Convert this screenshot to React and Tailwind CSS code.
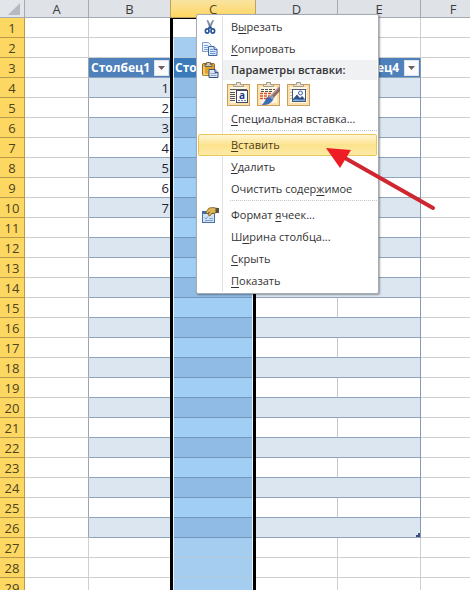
import React from "react";

const LAST_ROW = 29;
const TABLE_START = 3;
const TABLE_END = 26;
const columns = ["A", "B", "C", "D", "E", "F"];
const headings = { B: "Столбец1", C: "Столбец2", D: "Столбец3", E: "Столбец4" };

const inTable = (row) => row >= TABLE_START && row <= TABLE_END;

const getCellClass = (col, row) => {
  const table = inTable(row);
  const heading = row === TABLE_START;
  const band = table && !heading && row % 2 === 0;

  // Selected column, row lines are inset so that the black edge stays solid
  if (col === "C") {
    const edge = "border-x-[3px] border-x-black";
    if (row === 1)
      return `${edge} border-t border-t-black bg-white shadow-[inset_0_-1px_0_#a9c4dc]`;
    if (heading)
      return `${edge} bg-[#3a7abb] shadow-[inset_1px_0_0_#e8f3fd,inset_-1px_0_0_#e8f3fd,inset_0_-1px_0_#5f93c4]`;
    if (band)
      return `${edge} bg-[#8fbbe4] shadow-[inset_1px_0_0_#e8f3fd,inset_-1px_0_0_#e8f3fd,inset_0_-1px_0_#7397bb]`;
    if (table)
      return `${edge} bg-[#a0cef4] shadow-[inset_1px_0_0_#e8f3fd,inset_-1px_0_0_#e8f3fd,inset_0_-1px_0_#7397bb]`;
    return `${edge} bg-[#a5cdf0] shadow-[inset_1px_0_0_#e8f3fd,inset_-1px_0_0_#e8f3fd,inset_0_-1px_0_#b5cadb]`;
  }

  if ((col === "B" || col === "D" || col === "E") && table) {
    const bg = heading ? "bg-[#4e80bb]" : band ? "bg-[#dce6f0]" : "bg-white";
    let right = "";
    if (col === "E") right = "border-r border-r-[#8699b0]";
    if (col === "D" && !band && !heading) right = "border-r border-r-[#c3c8d0]";
    return `${bg} border-b border-b-[#8fa3bb] ${right}`;
  }

  if (col === "A" && table) {
    return "border-b border-r border-b-[#cfcfcf] border-r-[#9aa5b3]";
  }
  if (col === "B") return "border-b border-[#cfcfcf]";
  return "border-b border-r border-[#cfcfcf]";
};

const FilterCell = ({ label }) => (
  <div className="flex h-[19px] items-center justify-between pl-0.5 pr-px">
    <span className="text-[12px] leading-4 font-bold text-white">{label}</span>
    <button
      type="button"
      aria-label={`Фильтр: ${label}`}
      className="flex h-4 w-[15px] shrink-0 items-center justify-center border border-[#dfe3ea] bg-[#fbfbfd]"
    >
      <svg width="7" height="4" viewBox="0 0 7 4">
        <path d="M0 0H7L3.5 4Z" fill="#6b5f66" />
      </svg>
    </button>
  </div>
);

const Sheet = () => (
  <table className="w-full min-w-[486px] table-fixed border-separate border-spacing-0">
    <colgroup>
      <col className="w-[25px]" />
      <col className="w-16" />
      <col className="w-[81px]" />
      <col className="w-[86px]" />
      <col className="w-[82px]" />
      <col className="w-[83px]" />
      <col />
    </colgroup>
    <thead>
      <tr className="h-[18px] text-[13px] leading-4 text-[#3c3c3c]">
        <th className="border-b border-r border-[#a5abb3] bg-[#e2e5ea] p-0">
          <svg className="ml-auto mr-1 block" width="12" height="12" viewBox="0 0 12 12">
            <path d="M12 0V12H0Z" fill="#b5bac2" />
          </svg>
        </th>
        {columns.map((col) => (
          <th
            key={col}
            scope="col"
            className={`border-b p-0 font-normal ${
              col === "C"
                ? "border-x border-[#b8a468] bg-linear-to-b from-[#f9e3a0] to-[#ffd75e] text-[#5a4a20]"
                : col === "B"
                ? "border-[#a5abb3] bg-[#dfe3e8]"
                : "border-r border-[#a5abb3] bg-[#dfe3e8]"
            }`}
          >
            {col}
          </th>
        ))}
      </tr>
    </thead>
    <tbody>
      {Array.from({ length: LAST_ROW }, (_, i) => i + 1).map((row) => (
        <tr key={row} className="h-5">
          <th
            scope="row"
            className="border-b border-r border-[#b89a4a] bg-[#fcd863] p-0 text-[13px] leading-4 font-normal text-[#4f421c]"
          >
            {row}
          </th>
          {columns.map((col) => (
            <td
              key={col}
              className={`relative p-0 text-right text-[13px] leading-4 text-[#1e2433] ${getCellClass(
                col,
                row
              )}`}
            >
              {row === TABLE_START && headings[col] && (
                <FilterCell label={headings[col]} />
              )}
              {col === "B" && row >= 4 && row <= 10 && (
                <span className="block pr-px">{row - 3}</span>
              )}
              {/* Table resize corner */}
              {col === "E" && row === TABLE_END && (
                <svg className="absolute right-0 bottom-0" width="4" height="4" viewBox="0 0 4 4">
                  <path d="M4 0V4H0V2H2V0Z" fill="#3f4d8a" />
                </svg>
              )}
            </td>
          ))}
        </tr>
      ))}
    </tbody>
  </table>
);

const CutIcon = () => (
  <svg width="16" height="16" viewBox="0 0 16 16" fill="none">
    <path d="M5 1.5L6 1.5L9.5 9L8 9.5Z" fill="#6f8299" stroke="#6f8299" strokeWidth="0.6" />
    <path d="M11.5 1.5L10.5 1.5L6.5 9L8 9.5Z" fill="#8b9db3" stroke="#5d7592" strokeWidth="0.6" />
    <ellipse cx="5.2" cy="12" rx="1.8" ry="2.2" stroke="#2a5698" strokeWidth="1.7" />
    <ellipse cx="10.8" cy="12" rx="1.8" ry="2.2" stroke="#2a5698" strokeWidth="1.7" />
    <path d="M6 10L8 8L10 10" stroke="#2a5698" strokeWidth="1.6" />
  </svg>
);

const CopyIcon = () => (
  <svg width="16" height="16" viewBox="0 0 16 16">
    <path d="M0.5 1.5H6.5L9 4V10.5H0.5Z" fill="#eaf2fc" stroke="#7c9cc9" />
    <path d="M2 4.5H6M2 6.5H6M2 8.5H6" stroke="#7da3d8" />
    <path d="M6.5 5.5H12L15 8.5V14.5H6.5Z" fill="#d9e7fa" stroke="#3f66a5" />
    <path d="M12 5.5V8.5H15" fill="#b8cfea" stroke="#3f66a5" />
    <path d="M8 8.5H11M8 10.5H13.5M8 12.5H13.5" stroke="#6d97d2" />
  </svg>
);

const PasteIcon = () => (
  <svg width="17" height="16" viewBox="0 0 17 16">
    <rect x="0.5" y="1.5" width="12" height="12" rx="1" fill="#dfa22e" stroke="#93661b" />
    <path d="M2 4V12.500H6" stroke="#f6d47a" strokeWidth="1.5" fill="none" />
    <path d="M3 4.5V2.5H4.5V0.500H8.500V2.500H10V4.500Z" fill="#c9c2b4" stroke="#55504a" strokeWidth="0.8" />
    <path d="M7 7.500H13L16 10.500V15.500H7Z" fill="#dde6f5" stroke="#3a4f7c" />
    <path d="M13 7.500V10.500H16" fill="#b9cae4" stroke="#3a4f7c" />
    <path d="M8.500 11.500H14.500M8.500 13.500H14.500" stroke="#8ea5cb" />
  </svg>
);

const FormatIcon = () => (
  <svg width="17" height="16" viewBox="0 0 17 16">
    <rect x="0.5" y="4.5" width="12" height="11" fill="#d4e2f6" stroke="#4a6fa8" />
    <path d="M1 6H12" stroke="#3f6bb3" strokeWidth="2" />
    <path d="M2.500 10.500L4 12L6 9.500M7.500 11.500H11M3 13.500H11" stroke="#7f9fd0" fill="none" />
    <path d="M4 5L7 1L11 0.500L16 1.500V5L12 6.500L10 6L8 9L6 8L7.500 5L5 7Z" fill="#dfb655" stroke="#80611f" strokeWidth="0.8" />
    <path d="M13.500 1H17V6H13.500Z" fill="#55533f" />
  </svg>
);

const Clipboard = ({ children }) => (
  <svg width="23" height="24" viewBox="0 0 23 24">
    <rect x="0.5" y="2.500" width="22" height="21" fill="#fbe0ac" stroke="#c9a05c" />
    <rect x="3" y="5" width="17" height="16" fill="#fff6e2" />
    <path d="M6.500 4.500V2.500H9.500V0.500H13.500V2.500H16.500V4.500Z" fill="#ece4d2" stroke="#a59a82" />
    {children}
  </svg>
);

const PasteKeepIcon = () => (
  <Clipboard>
    <path d="M3 7.500H20M3 10.500H8M3 12.500H8M3 14.500H8M3 16.500H8M3 18.500H8" stroke="#55535a" />
    <rect x="9.500" y="8.500" width="11" height="12" fill="#fff" stroke="#3d4868" />
    <text x="15" y="17" textAnchor="middle" fontSize="10" fontWeight="bold" fill="#243c84">
      a
    </text>
    <path d="M11 18.500H19" stroke="#6f7fae" strokeDasharray="2 1" />
  </Clipboard>
);

const PasteBrushIcon = () => (
  <Clipboard>
    <path d="M4 7.500H18M4 9.500H16" stroke="#4f4c50" strokeDasharray="3 1" />
    <path d="M3 11.500H15M3 14H13M3 16.500H10" stroke="#d9562c" strokeWidth="1.5" strokeDasharray="3 1" />
    <path d="M23 4L14 13.500L16.500 16L23 9Z" fill="#8d6c66" />
    <path d="M23 4L14.500 13" stroke="#c3a9a0" strokeWidth="1.2" />
    <path d="M14.500 12.500L17.500 15.500L15.500 18.500L11.500 15.500Z" fill="#8f9ab0" />
    <path d="M11.500 14.500L16 18C14 21.500 10 23.500 4.500 23C8 21 8 16.500 11.500 14.500Z" fill="#3f6db5" />
  </Clipboard>
);

const PastePictureIcon = () => (
  <Clipboard>
    <path d="M3 7.500H20M3 10.500H5M3 13.500H5M3 16.500H5" stroke="#c9bfa8" />
    <rect x="5.500" y="7.500" width="13" height="12" fill="#fff" stroke="#4a5878" />
    <circle cx="13.500" cy="11" r="2" fill="#f5f8fc" stroke="#3d5f98" />
    <path d="M6 17L10 12.500L13 16L15 14L18 17V19H6Z" fill="#2f4f86" />
    <path d="M6 18C9 16 13 19 18 17V19H6Z" fill="#7fb0e0" />
  </Clipboard>
);

const MenuItem = ({ icon, active, before = "", letter, after }) => (
  <button
    type="button"
    role="menuitem"
    className={`relative flex h-[22px] w-full items-center rounded-xs border text-left text-[11px] leading-4 ${
      active
        ? "border-[#e8c75c] bg-linear-to-b from-[#fff6d5] via-[#fde38d] to-[#fdeaa6] text-[#4a3f1c]"
        : "border-transparent text-[#333]"
    }`}
  >
    <span className="flex w-8 shrink-0 items-center pl-[3px]">{icon}</span>
    <span className="whitespace-nowrap">
      {before}
      <u className="underline-offset-2">{letter}</u>
      {after}
    </span>
  </button>
);

const Separator = () => (
  <div role="separator" className="ml-8 flex h-1 items-start">
    <div className="w-full border-t border-dotted border-[#c3c6cb]" />
  </div>
);

const ContextMenu = () => (
  <div
    role="menu"
    className="absolute top-[14px] left-[196px] w-[183px] rounded-xs border border-[#a3abb5] bg-white p-px shadow-[1px_1px_2px_rgba(0,0,0,0.35)]"
  >
    {/* Icon gutter line */}
    <div className="absolute top-px bottom-px left-[25px] w-px bg-[#e0e2e5]" />

    <MenuItem icon={<CutIcon />} before="В" letter="ы" after="резать" />
    <MenuItem icon={<CopyIcon />} letter="К" after="опировать" />

    <div className="relative flex h-5 items-center">
      <span className="flex w-[25px] shrink-0 pl-1">
        <PasteIcon />
      </span>
      <span className="flex h-full flex-1 items-center bg-[#f0f1f3] pl-2 text-[11px] leading-4 font-semibold whitespace-nowrap text-[#333]">
        Параметры вставки:
      </span>
    </div>
    <div className="flex h-7 items-center gap-[7px] pl-[29px]">
      <button type="button" aria-label="Сохранить исходное форматирование">
        <PasteKeepIcon />
      </button>
      <button type="button" aria-label="Форматирование">
        <PasteBrushIcon />
      </button>
      <button type="button" aria-label="Рисунок">
        <PastePictureIcon />
      </button>
    </div>

    <MenuItem letter="С" after="пециальная вставка..." />
    <Separator />
    <MenuItem active letter="В" after="ставить" />
    <MenuItem letter="У" after="далить" />
    <MenuItem before="Очистить содер" letter="ж" after="имое" />
    <Separator />
    <MenuItem icon={<FormatIcon />} before="Формат " letter="я" after="чеек..." />
    <MenuItem before="Ш" letter="и" after="рина столбца..." />
    <MenuItem letter="С" after="крыть" />
    <MenuItem letter="П" after="оказать" />
  </div>
);

const Arrow = () => (
  <svg
    className="pointer-events-none absolute top-[146px] left-[325px]"
    width="112"
    height="66"
    viewBox="0 0 112 66"
  >
    <path d="M20 12L108 62" stroke="#cf2730" strokeWidth="4" strokeLinecap="round" />
    <path d="M1 2L26 4L15 22Z" fill="#ee1c24" />
  </svg>
);

const App = () => {
  return (
    <div className="relative h-screen overflow-hidden bg-white font-['Open_Sans','Noto_Sans',sans-serif]">
      <Sheet />
      <ContextMenu />
      <Arrow />
    </div>
  );
};

export default App;
